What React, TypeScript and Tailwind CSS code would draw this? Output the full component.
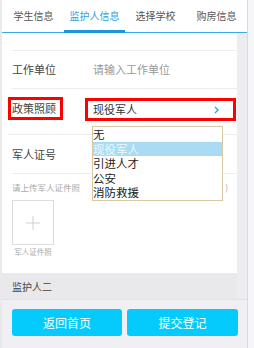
import React from "react";

const tabs = ["学生信息", "监护人信息", "选择学校", "购房信息"];
const options = ["无", "现役军人", "引进人才", "公安", "消防救援"];

export default function App() {
  return (
    <div
      className="relative flex h-[348px] w-[254px] overflow-hidden bg-[#f4f4f7]"
      style={{ fontFamily: '"Noto Sans CJK SC", "Noto Sans", sans-serif' }}
    >
      <div className="w-[2px] shrink-0 bg-[#e9e9ec]" />
      <div className="flex w-[245px] shrink-0 flex-col">
        {/* tab bar */}
        <div className="grid h-[33px] shrink-0 grid-cols-4 border-b border-[#39ace8] bg-white pl-[1px]">
          {tabs.map((t, i) => (
            <div
              key={t}
              className={
                i === 1
                  ? "relative flex items-center justify-center pb-[2px] text-[10px] text-[#2b9fe2]"
                  : "relative flex items-center justify-center pb-[2px] text-[10px] text-[#555]"
              }
            >
              {t}
              {i === 1 && <div className="absolute bottom-[-1px] left-0 right-0 h-[3px] bg-[#1a96dc]" />}
            </div>
          ))}
        </div>
        {/* body */}
        <div className="flex flex-1">
          <div className="relative flex w-[235px] flex-col bg-white">
            <div className="ml-[10px] h-[18px] border-b border-[#ececec]" />
            <div className="ml-[10px] flex h-[38px] items-center border-b border-[#ececec] text-[11px]">
              <span className="w-[81px] text-[#444]">工作单位</span>
              <span className="text-[#999]">请输入工作单位</span>
            </div>
            <div className="ml-[6px] flex h-[46px] items-start border-b border-[#ececec] pt-[8px] text-[11px]">
              <div className="flex h-[23px] w-[55px] items-center border-[3px] border-[#ff0000] pl-[1px] text-[#444]">
                政策照顾
              </div>
              <div className="ml-[22px] mt-[1px] flex h-[23px] w-[151px] items-center justify-between border-[3px] border-[#ff0000] pl-[5px] pr-[14px] text-[#333]">
                <span>现役军人</span>
                <svg width="5" height="8" viewBox="0 0 5 8">
                  <polyline points="1,1 4,4 1,7" fill="none" stroke="#2b9fe2" strokeWidth="1.3" />
                </svg>
              </div>
            </div>
            <div className="ml-[10px] flex h-[39px] items-center border-b border-[#ececec] text-[11px] text-[#444]">
              军人证号
            </div>
            <div className="flex h-[99px] flex-col pl-[10px] pt-[7px]">
              <div className="flex h-[12px] items-center justify-between pr-[9px] text-[8.5px] text-[#aaa]">
                <span>请上传军人证件照</span>
                <span>)</span>
              </div>
              <div className="mt-[7px] flex h-[45px] w-[42px] items-center justify-center border border-[#dcdcdc]">
                <svg width="14" height="14" viewBox="0 0 14 14">
                  <line x1="7" y1="0" x2="7" y2="14" stroke="#d0d0d0" strokeWidth="1" />
                  <line x1="0" y1="7" x2="14" y2="7" stroke="#d0d0d0" strokeWidth="1" />
                </svg>
              </div>
              <div className="mt-[2px] w-[42px] text-center text-[7.5px] leading-[10px] text-[#aaa]">军人证件照</div>
            </div>
            <div className="flex h-[26px] items-center bg-[#e9e9eb] pl-[10px] text-[10px] text-[#444]">监护人二</div>

            {/* dropdown */}
            <div className="absolute left-[90px] top-[93px] w-[131px] border border-[#d8c9a4] bg-white text-[11.5px] leading-[14.6px] text-[#222]">
              {options.map((o, i) => (
                <div key={o} className={i === 1 ? "bg-[#a9dcf3] text-[#eef8ff]" : ""}>
                  {o}
                </div>
              ))}
            </div>
          </div>
          <div className="w-[10px] bg-[#ededf1]" />
        </div>
        {/* bottom bar */}
        <div className="flex h-[49px] shrink-0 gap-[5px] border-t border-[#e2e2e6] bg-[#efeff4] pl-[10px] pt-[9px]">
          <button className="h-[27px] w-[110px] rounded-[3px] bg-[#05cbfc] text-[12px] text-white">返回首页</button>
          <button className="h-[27px] w-[111px] rounded-[3px] bg-[#05cbfc] text-[12px] text-white">提交登记</button>
        </div>
      </div>
      <div className="w-[1px] shrink-0 bg-[#dadade]" />
      <div className="flex-1 bg-[#f6f6f8]" />
    </div>
  );
}
